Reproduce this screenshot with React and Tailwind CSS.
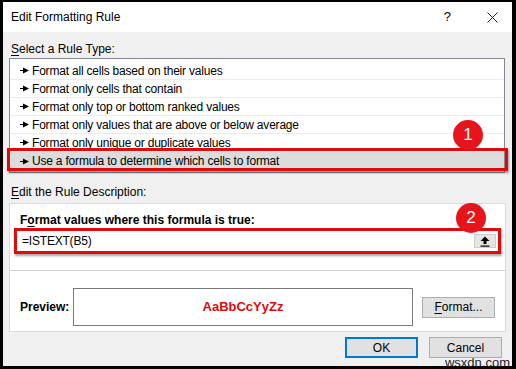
import React from 'react';

const RULE_TYPES = [
    'Format all cells based on their values',
    'Format only cells that contain',
    'Format only top or bottom ranked values',
    'Format only values that are above or below average',
    'Format only unique or duplicate values',
    'Use a formula to determine which cells to format',
];

const FONT = { fontFamily: '"Liberation Sans", Arial, sans-serif' };

function Pointer() {
    return (
        <svg width="9" height="7" viewBox="0 0 9 7" className="shrink-0">
            <line x1="0" y1="3.5" x2="4" y2="3.5" stroke="#000" strokeWidth="1" />
            <polygon points="3,0.5 9,3.5 3,6.5" fill="#000" />
        </svg>
    );
}

function Badge({ n, className }) {
    return (
        <div className={`absolute w-[30px] h-[30px] rounded-full bg-[#e8141c] text-white flex items-center justify-center text-[17px] ${className}`}>
            {n}
        </div>
    );
}

function WinButton({ children, focused, className = '' }) {
    return (
        <button
            className={`h-[21px] w-[73px] bg-[#e1e1e1] text-[12px] text-black flex items-center justify-center ${
                focused ? 'border-2 border-[#0078d7]' : 'border border-[#adadad]'
            } ${className}`}
        >
            {children}
        </button>
    );
}

export default function App() {
    return (
        <div className="w-[516px] h-[369px] bg-black pt-[2px] pl-[3px] pr-[4px] pb-[3px]" style={FONT}>
            <div className="w-full h-full flex flex-col bg-[#f0f0f0] text-[12px] text-black relative">
                <div className="h-[30px] bg-white flex items-center pl-[8px] pr-[14px] shrink-0">
                    <span className="text-[12px]">Edit Formatting Rule</span>
                    <span className="ml-auto text-[13px] mr-[36px]">?</span>
                    <svg width="11" height="11" viewBox="0 0 11 11">
                        <path d="M0.5 0.5 L10.5 10.5 M10.5 0.5 L0.5 10.5" stroke="#222" strokeWidth="1" />
                    </svg>
                </div>

                <div className="flex-1 flex flex-col pl-[6px] pr-[6px]">
                    <div className="mt-[10px] h-[15px] leading-[15px] pl-[2px]">
                        <span className="underline underline-offset-2">S</span>elect a Rule Type:
                    </div>

                    <div className="relative mt-[1px]">
                        <div className="border border-[#828790] bg-white pt-[3px] pb-[2px] mr-[1px]">
                            {RULE_TYPES.map((t, i) => (
                                <div
                                    key={t}
                                    className={`h-[18px] flex items-center gap-[3px] pl-[10px] tracking-[-0.2px] ${
                                        i === RULE_TYPES.length - 1 ? 'bg-[#dcdcdc]' : 'border-b border-[#ececec]'
                                    }`}
                                >
                                    <Pointer />
                                    <span>{t}</span>
                                </div>
                            ))}
                        </div>
                        <div className="absolute left-[-2px] right-[-2px] top-[90px] h-[23px] border-[3px] border-[#e00a0a] shadow-[1px_2px_2px_rgba(0,0,0,0.35)]" />
                        <Badge n="1" className="left-[444px] top-[62px]" />
                    </div>

                    <div className="mt-[12px] h-[15px] leading-[15px] pl-[2px]">
                        <span className="underline underline-offset-2">E</span>dit the Rule Description:
                    </div>

                    <div className="mt-[3px] border border-[#dcdcdc] bg-white flex flex-col h-[129px]">
                        <div className="relative px-[4px]">
                            <div className="mt-[9px] h-[15px] leading-[15px] font-bold pl-[6px]">
                                F<span className="underline underline-offset-2">o</span>rmat values where this formula is true:
                            </div>
                            <div className="mt-[0px] h-[26px] border-[3px] border-[#e00a0a] shadow-[1px_2px_2px_rgba(0,0,0,0.35)] flex items-center pl-[5px] pr-[2px]">
                                <span className="tracking-[-0.2px]">=ISTEXT(B5)</span>
                                <div className="ml-auto w-[22px] h-[14px] bg-[#e5e5e5] border border-[#cfcfcf] flex items-center justify-center">
                                    <svg width="10" height="11" viewBox="0 0 10 11">
                                        <path d="M5 0.5 L9.5 5 L6.5 5 L6.5 8 L3.5 8 L3.5 5 L0.5 5 Z" fill="#000" />
                                        <rect x="0.5" y="9.5" width="9" height="1.2" fill="#000" />
                                    </svg>
                                </div>
                            </div>
                            <Badge n="2" className="left-[446px] top-[-1px]" />
                        </div>

                        <div className="mt-[16px] border-t border-[#d0d0d0]" />

                        <div className="flex items-center mt-[17px] pl-[10px] pr-[10px]">
                            <span className="font-bold w-[53px]">Preview:</span>
                            <div className="w-[340px] h-[38px] border border-[#7a7a7a] bg-white flex items-center justify-center">
                                <span className="font-bold text-[#e00a0a] text-[13px]">AaBbCcYyZz</span>
                            </div>
                            <WinButton className="ml-[9px] h-[20px]">
                                <span className="underline underline-offset-2">F</span>ormat...
                            </WinButton>
                        </div>
                    </div>

                    <div className="flex justify-end gap-[11px] mt-[5px] pr-[4px]">
                        <WinButton focused>OK</WinButton>
                        <WinButton>Cancel</WinButton>
                    </div>
                </div>

                <span className="absolute right-[2px] bottom-[-4px] text-[13px] text-[#222] leading-[15px]">wsxdn.com</span>
            </div>
        </div>
    );
}
